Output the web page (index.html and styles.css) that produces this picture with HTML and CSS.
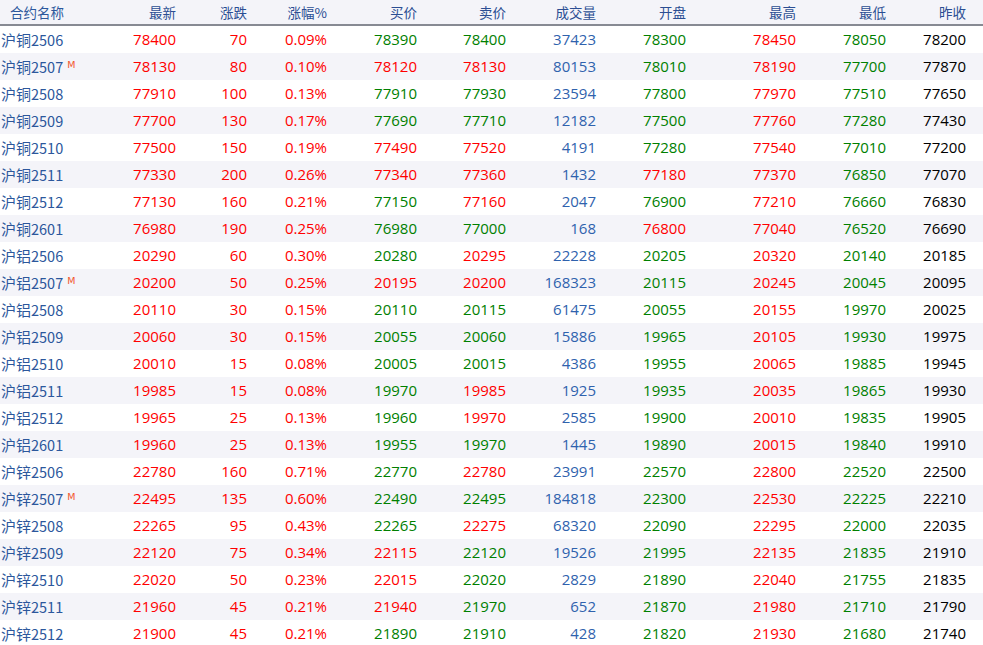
FILE: index.html
```html
<!DOCTYPE html>
<html lang="zh">
<head>
<meta charset="utf-8">
<title>行情</title>
<link rel="stylesheet" href="styles.css">
</head>
<body>
<div class="quote">
  <div class="row head">
    <div class="name">合约名称</div><div>最新</div><div>涨跌</div><div>涨幅%</div><div>买价</div><div>卖价</div><div>成交量</div><div>开盘</div><div>最高</div><div>最低</div><div>昨收</div>
  </div>

  <div class="row"><div class="name"><span class="cn">沪铜</span>2506</div><div class="r">78400</div><div class="r">70</div><div class="r">0.09%</div><div class="g">78390</div><div class="g">78400</div><div class="b">37423</div><div class="g">78300</div><div class="r">78450</div><div class="g">78050</div><div class="k">78200</div></div>
  <div class="row"><div class="name"><span class="cn">沪铜</span>2507<span class="m">M</span></div><div class="r">78130</div><div class="r">80</div><div class="r">0.10%</div><div class="r">78120</div><div class="r">78130</div><div class="b">80153</div><div class="g">78010</div><div class="r">78190</div><div class="g">77700</div><div class="k">77870</div></div>
  <div class="row"><div class="name"><span class="cn">沪铜</span>2508</div><div class="r">77910</div><div class="r">100</div><div class="r">0.13%</div><div class="g">77910</div><div class="g">77930</div><div class="b">23594</div><div class="g">77800</div><div class="r">77970</div><div class="g">77510</div><div class="k">77650</div></div>
  <div class="row"><div class="name"><span class="cn">沪铜</span>2509</div><div class="r">77700</div><div class="r">130</div><div class="r">0.17%</div><div class="g">77690</div><div class="g">77710</div><div class="b">12182</div><div class="g">77500</div><div class="r">77760</div><div class="g">77280</div><div class="k">77430</div></div>
  <div class="row"><div class="name"><span class="cn">沪铜</span>2510</div><div class="r">77500</div><div class="r">150</div><div class="r">0.19%</div><div class="r">77490</div><div class="r">77520</div><div class="b">4191</div><div class="g">77280</div><div class="r">77540</div><div class="g">77010</div><div class="k">77200</div></div>
  <div class="row"><div class="name"><span class="cn">沪铜</span>2511</div><div class="r">77330</div><div class="r">200</div><div class="r">0.26%</div><div class="r">77340</div><div class="r">77360</div><div class="b">1432</div><div class="r">77180</div><div class="r">77370</div><div class="g">76850</div><div class="k">77070</div></div>
  <div class="row"><div class="name"><span class="cn">沪铜</span>2512</div><div class="r">77130</div><div class="r">160</div><div class="r">0.21%</div><div class="g">77150</div><div class="r">77160</div><div class="b">2047</div><div class="g">76900</div><div class="r">77210</div><div class="g">76660</div><div class="k">76830</div></div>
  <div class="row"><div class="name"><span class="cn">沪铜</span>2601</div><div class="r">76980</div><div class="r">190</div><div class="r">0.25%</div><div class="g">76980</div><div class="g">77000</div><div class="b">168</div><div class="r">76800</div><div class="r">77040</div><div class="g">76520</div><div class="k">76690</div></div>

  <div class="row"><div class="name"><span class="cn">沪铝</span>2506</div><div class="r">20290</div><div class="r">60</div><div class="r">0.30%</div><div class="g">20280</div><div class="r">20295</div><div class="b">22228</div><div class="g">20205</div><div class="r">20320</div><div class="g">20140</div><div class="k">20185</div></div>
  <div class="row"><div class="name"><span class="cn">沪铝</span>2507<span class="m">M</span></div><div class="r">20200</div><div class="r">50</div><div class="r">0.25%</div><div class="r">20195</div><div class="r">20200</div><div class="b">168323</div><div class="g">20115</div><div class="r">20245</div><div class="g">20045</div><div class="k">20095</div></div>
  <div class="row"><div class="name"><span class="cn">沪铝</span>2508</div><div class="r">20110</div><div class="r">30</div><div class="r">0.15%</div><div class="g">20110</div><div class="g">20115</div><div class="b">61475</div><div class="g">20055</div><div class="r">20155</div><div class="g">19970</div><div class="k">20025</div></div>
  <div class="row"><div class="name"><span class="cn">沪铝</span>2509</div><div class="r">20060</div><div class="r">30</div><div class="r">0.15%</div><div class="g">20055</div><div class="g">20060</div><div class="b">15886</div><div class="g">19965</div><div class="r">20105</div><div class="g">19930</div><div class="k">19975</div></div>
  <div class="row"><div class="name"><span class="cn">沪铝</span>2510</div><div class="r">20010</div><div class="r">15</div><div class="r">0.08%</div><div class="g">20005</div><div class="g">20015</div><div class="b">4386</div><div class="g">19955</div><div class="r">20065</div><div class="g">19885</div><div class="k">19945</div></div>
  <div class="row"><div class="name"><span class="cn">沪铝</span>2511</div><div class="r">19985</div><div class="r">15</div><div class="r">0.08%</div><div class="g">19970</div><div class="r">19985</div><div class="b">1925</div><div class="g">19935</div><div class="r">20035</div><div class="g">19865</div><div class="k">19930</div></div>
  <div class="row"><div class="name"><span class="cn">沪铝</span>2512</div><div class="r">19965</div><div class="r">25</div><div class="r">0.13%</div><div class="g">19960</div><div class="r">19970</div><div class="b">2585</div><div class="g">19900</div><div class="r">20010</div><div class="g">19835</div><div class="k">19905</div></div>
  <div class="row"><div class="name"><span class="cn">沪铝</span>2601</div><div class="r">19960</div><div class="r">25</div><div class="r">0.13%</div><div class="g">19955</div><div class="g">19970</div><div class="b">1445</div><div class="g">19890</div><div class="r">20015</div><div class="g">19840</div><div class="k">19910</div></div>

  <div class="row"><div class="name"><span class="cn">沪锌</span>2506</div><div class="r">22780</div><div class="r">160</div><div class="r">0.71%</div><div class="g">22770</div><div class="r">22780</div><div class="b">23991</div><div class="g">22570</div><div class="r">22800</div><div class="g">22520</div><div class="k">22500</div></div>
  <div class="row"><div class="name"><span class="cn">沪锌</span>2507<span class="m">M</span></div><div class="r">22495</div><div class="r">135</div><div class="r">0.60%</div><div class="g">22490</div><div class="g">22495</div><div class="b">184818</div><div class="g">22300</div><div class="r">22530</div><div class="g">22225</div><div class="k">22210</div></div>
  <div class="row"><div class="name"><span class="cn">沪锌</span>2508</div><div class="r">22265</div><div class="r">95</div><div class="r">0.43%</div><div class="g">22265</div><div class="r">22275</div><div class="b">68320</div><div class="g">22090</div><div class="r">22295</div><div class="g">22000</div><div class="k">22035</div></div>
  <div class="row"><div class="name"><span class="cn">沪锌</span>2509</div><div class="r">22120</div><div class="r">75</div><div class="r">0.34%</div><div class="r">22115</div><div class="g">22120</div><div class="b">19526</div><div class="g">21995</div><div class="r">22135</div><div class="g">21835</div><div class="k">21910</div></div>
  <div class="row"><div class="name"><span class="cn">沪锌</span>2510</div><div class="r">22020</div><div class="r">50</div><div class="r">0.23%</div><div class="r">22015</div><div class="g">22020</div><div class="b">2829</div><div class="g">21890</div><div class="r">22040</div><div class="g">21755</div><div class="k">21835</div></div>
  <div class="row"><div class="name"><span class="cn">沪锌</span>2511</div><div class="r">21960</div><div class="r">45</div><div class="r">0.21%</div><div class="r">21940</div><div class="g">21970</div><div class="b">652</div><div class="g">21870</div><div class="r">21980</div><div class="g">21710</div><div class="k">21790</div></div>
  <div class="row"><div class="name"><span class="cn">沪锌</span>2512</div><div class="r">21900</div><div class="r">45</div><div class="r">0.21%</div><div class="g">21890</div><div class="g">21910</div><div class="b">428</div><div class="g">21820</div><div class="r">21930</div><div class="g">21680</div><div class="k">21740</div></div>
</div>
</body>
</html>
```

FILE: styles.css
```css
html, body {
  margin: 0;
  padding: 0;
  background: #ffffff;
}

body {
  font-family: "Open Sans", "Noto Sans CJK SC", sans-serif;
  font-size: 15px;
  overflow: hidden;
}

.quote {
  width: 983px;
}

.row {
  display: grid;
  grid-template-columns: 110px 66px 71px 80px 90px 89px 90px 90px 110px 90px 80px 17px;
  height: 27px;
  align-items: center;
  text-align: right;
  white-space: nowrap;
  line-height: 27px;
}

.row:nth-child(odd) {
  background: #f4f4f9;
}

.row.head {
  height: 24px;
  line-height: 24px;
  background: #f4f4f9;
  border-bottom: 2px solid #878a93;
  color: #2b4e93;
  font-family: "Noto Sans CJK SC", "Open Sans", sans-serif;
  font-size: 13.5px;
}

.row.head .name {
  padding-left: 10px;
  font-size: 13.5px;
  font-family: "Noto Sans CJK SC", sans-serif;
}

.name {
  text-align: left;
  padding-left: 1px;
  color: #2c579c;
  font-family: "Noto Sans CJK SC", "Open Sans", sans-serif;
  font-size: 14.5px;
}

.cn {
  font-size: 15px;
}

.m {
  display: inline-block;
  margin-left: 4px;
  vertical-align: 5px;
  line-height: 10px;
  font-size: 9.5px;
  color: #f2562c;
  font-family: "DejaVu Sans", sans-serif;
}

.r { color: #ff0000; }
.g { color: #008000; }
.b { color: #2f62ad; }
.k { color: #000000; }
```
